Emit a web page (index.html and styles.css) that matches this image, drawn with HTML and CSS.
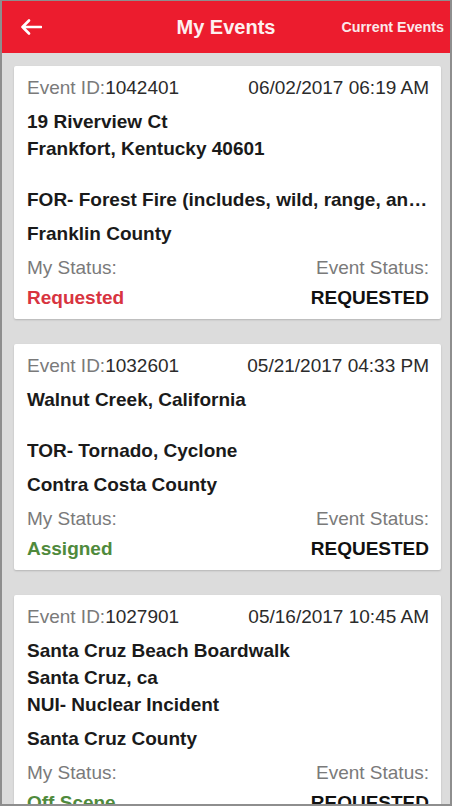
FILE: index.html
```html
<!DOCTYPE html>
<html lang="en">
<head>
    <meta charset="UTF-8">
    <meta name="viewport" content="width=device-width, initial-scale=1.0">
    <title>My Events</title>
    <link rel="stylesheet" href="styles.css">
</head>
<body>
    <div class="screen">
        <header class="top-bar">
            <button class="back-button" aria-label="Back">
                <svg width="22" height="16" viewBox="0 0 22 16">
                    <path d="M21 8H2.5M9 1.5L2.5 8L9 14.5" fill="none" stroke="#fff" stroke-width="2.6" stroke-linecap="round" stroke-linejoin="round"/>
                </svg>
            </button>
            <h1 class="title">My Events</h1>
            <a class="current-link" href="#">Current Events</a>
        </header>

        <div class="event-list">
            <div class="event-card">
                <div class="event-head">
                    <span><span class="label">Event ID:</span>1042401</span>
                    <span class="event-date">06/02/2017 06:19 AM</span>
                </div>
                <div class="event-lines">
                    <div class="line">19 Riverview Ct</div>
                    <div class="line">Frankfort, Kentucky 40601</div>
                    <div class="spacer"></div>
                    <div class="line truncate">FOR- Forest Fire (includes, wild, range, and urban-wildland interface fires)</div>
                </div>
                <div class="county">Franklin County</div>
                <div class="status">
                    <span class="label">My Status:</span>
                    <span class="label right">Event Status:</span>
                    <span class="my-status requested">Requested</span>
                    <span class="event-status">REQUESTED</span>
                </div>
            </div>

            <div class="event-card">
                <div class="event-head">
                    <span><span class="label">Event ID:</span>1032601</span>
                    <span class="event-date">05/21/2017 04:33 PM</span>
                </div>
                <div class="event-lines">
                    <div class="line">Walnut Creek, California</div>
                    <div class="spacer"></div>
                    <div class="line truncate">TOR- Tornado, Cyclone</div>
                </div>
                <div class="county">Contra Costa County</div>
                <div class="status">
                    <span class="label">My Status:</span>
                    <span class="label right">Event Status:</span>
                    <span class="my-status assigned">Assigned</span>
                    <span class="event-status">REQUESTED</span>
                </div>
            </div>

            <div class="event-card">
                <div class="event-head">
                    <span><span class="label">Event ID:</span>1027901</span>
                    <span class="event-date">05/16/2017 10:45 AM</span>
                </div>
                <div class="event-lines">
                    <div class="line">Santa Cruz Beach Boardwalk</div>
                    <div class="line">Santa Cruz, ca</div>
                    <div class="line truncate">NUI- Nuclear Incident</div>
                </div>
                <div class="county">Santa Cruz County</div>
                <div class="status">
                    <span class="label">My Status:</span>
                    <span class="label right">Event Status:</span>
                    <span class="my-status assigned">Off Scene</span>
                    <span class="event-status">REQUESTED</span>
                </div>
            </div>
        </div>
    </div>
</body>
</html>
```

FILE: styles.css
```css
body {
    margin: 0;
    padding: 0;
    background-color: #fff;
    font-family: 'Liberation Sans', Arial, sans-serif;
}

.screen {
    box-sizing: border-box;
    width: 452px;
    height: 806px;
    border: 2px solid #8e8e8e;
    border-top-width: 1px;
    background-color: #dcdcdc;
    overflow: hidden;
}

/* header */

.top-bar {
    height: 52px;
    background-color: #ec1c2e;
    display: grid;
    grid-template-columns: 1fr auto 1fr;
    align-items: center;
    color: #fff;
}

.back-button {
    justify-self: start;
    background: none;
    border: none;
    padding: 0 0 0 18px;
    display: flex;
    align-items: center;
    cursor: pointer;
}

.title {
    margin: 0;
    font-size: 20px;
    font-weight: bold;
    color: #fdf0f0;
}

.current-link {
    justify-self: end;
    padding-right: 6px;
    font-size: 14.3px;
    font-weight: bold;
    color: #fbe9ea;
    text-decoration: none;
}

/* cards */

.event-list {
    display: flex;
    flex-direction: column;
    gap: 25px;
    padding: 13px 9px 0 12px;
}

.event-card {
    background-color: #fff;
    border-radius: 2px;
    box-shadow: 0 1px 2px rgba(0, 0, 0, 0.18);
    padding: 8px 12px 8px 13px;
    font-size: 19px;
    color: #1a1a1a;
}

.event-head {
    display: flex;
    justify-content: space-between;
    line-height: 28px;
    color: #2b2b2b;
}

.label {
    color: #7a7a7a;
}

.event-lines {
    margin-top: 6px;
    font-weight: bold;
    line-height: 27px;
}

.spacer {
    height: 24px;
}

.truncate {
    white-space: nowrap;
    overflow: hidden;
    text-overflow: ellipsis;
}

.county {
    margin-top: 7px;
    font-weight: bold;
    line-height: 27px;
}

.status {
    margin-top: 7px;
    display: grid;
    grid-template-columns: 1fr 1fr;
    row-gap: 3px;
    line-height: 27px;
}

.right {
    text-align: right;
}

.my-status {
    font-weight: bold;
}

.requested {
    color: #d8343f;
}

.assigned {
    color: #4f8a3c;
}

.event-status {
    text-align: right;
    font-weight: bold;
    color: #111;
}
```
